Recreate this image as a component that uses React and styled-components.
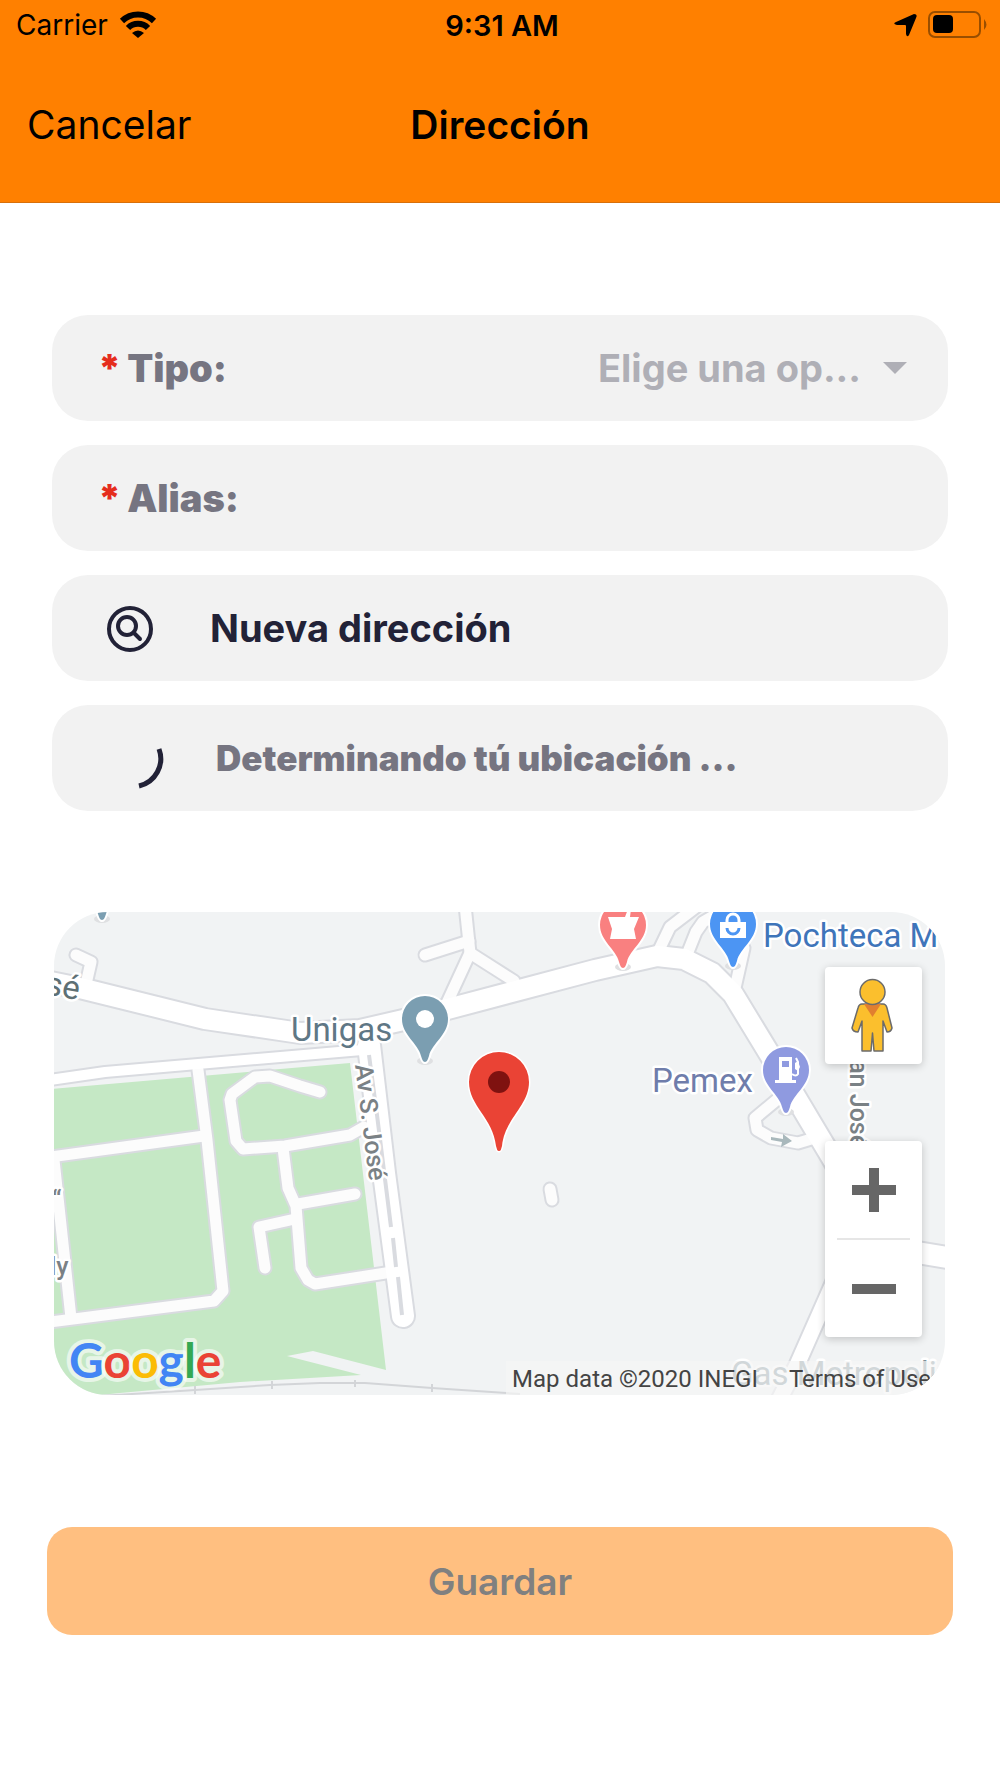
import React from 'react'

import styled, { createGlobalStyle } from 'styled-components'

const Colors = {
  primary: '#ff8000',
  field: '#f2f2f2',
  label: '#767581',
  placeholder: '#afafb6',
  dark: '#222237',
  required: '#e52d1d',
}

const streets = [
  'M76 955 L91 962 L86 984',
  'M465 905 L470 953 L446 1005',
  'M425 955 L469 941',
  'M470 953 L514 981',
  'M700 904 L670 927 L659 950',
  'M722 911 L703 922 L696 932 L688 952',
  'M744 948 L735 988',
  'M779 1098 L755 1118 L757 1130 L771 1138 L798 1143 L818 1137',
  'M550 1189 L552 1200',
]

const parkStreets = [
  'M50 1157 L204 1136',
  'M198 1070 L207 1140 L223 1291 L214 1301 L50 1322',
  'M54 1160 L71 1318',
  'M320 1092 L300 1086 L270 1076 L255 1077 L232 1094 L230 1100 L236 1141 L243 1149 L285 1146 L350 1135 L364 1127',
  'M283 1148 L288 1188 L296 1206 L301 1268 L308 1280 L315 1284 L392 1272',
  'M298 1204 L355 1194',
  'M295 1219 L259 1227 L265 1268',
]

const avenues = [
  { d: 'M50 982 L80 988 L205 1019 L300 1033 L360 1030 L425 1015 L595 970 L657 956 L684 959 L712 973 L733 994 L795 1096 L900 1272', width: 20 },
  { d: 'M860 1243 L950 1258', width: 21 },
  { d: 'M850 1245 L797 1365 L778 1402', width: 15 },
  { d: 'M50 1080 L105 1072 L362 1050', width: 10 },
  { d: 'M369 1045 L384 1173 L403 1316', width: 22 },
]

const pinShape = 'M0 43 C-2 43 -3 40 -4 37 C-7 24 -23 16 -23 0 A23 23 0 0 1 23 0 C23 16 7 24 4 37 C3 40 2 43 0 43 Z'

const Pin = ({ x, y, color, children }) => (
  <g transform={`translate(${x} ${y})`}>
    <ellipse cx="0" cy="42" rx="8" ry="4" fill="#dfe0e2" />
    <path d={pinShape} fill={color} stroke="#fff" strokeWidth="4" paintOrder="stroke" />
    {children}
  </g>
)

const MapDrawing = () => (
  <MapSvg viewBox="54 912 891 483" preserveAspectRatio="xMidYMid slice" aria-hidden="true">
    <path d="M50 1089 L350 1063 L386 1370 L313 1351 L287 1356 L361 1375 L240 1382 L120 1393 L50 1400 Z" fill="#c5e8c5" />
    <path d="M100 1396 L180 1391 L270 1385 L320 1383 L365 1383 L432 1388 L520 1394" fill="none" stroke="#d3d5d8" strokeWidth="2" />
    <path d="M195 1386v8 M272 1381v8 M355 1380v7 M432 1384v8" stroke="#d3d5d8" strokeWidth="2" />

    <g fill="none" strokeLinecap="round" strokeLinejoin="round">
      {[...streets, ...parkStreets].map(d => <path key={d} d={d} stroke="#d9dbe0" strokeWidth="15" />)}
      {avenues.map(road => <path key={road.d} d={road.d} stroke="#d9dbe0" strokeWidth={road.width + 4} />)}
      {[...streets, ...parkStreets].map(d => <path key={d} d={d} stroke="#fcfcfc" strokeWidth="11" />)}
      {avenues.map(road => <path key={road.d} d={road.d} stroke="#fff" strokeWidth={road.width} />)}
    </g>
    <path d="M369 1055 L377 1115 L391 1227 M393 1238 L396 1267 M398 1277 L402 1315" fill="none" stroke="#d9dbe0" strokeWidth="4" />
    <path d="M771 1137 L783 1139 L783 1134 L792 1141 L781 1147 L782 1142 L771 1140 Z" fill="#a9b8bc" />

    <Pin x={102} y={877} color="#7b9eb1" />
    <Pin x={425} y={1019} color="#7b9eb1">
      <circle r="9" fill="#fff" />
    </Pin>
    <Pin x={623} y={925} color="#f98080">
      <path d="M-15 -8 H2 L5 -16 H8 L7 -8 H16 L11 4 L13 14 H-13 L-11 4 Z" fill="#fff" />
    </Pin>
    <Pin x={733} y={924} color="#4c95f3">
      <path d="M-13 -2 H13 V14 H-13 Z" fill="#fff" />
      <path d="M-6 -1 V-4 A6 6 0 0 1 6 -4 V-1" fill="none" stroke="#fff" strokeWidth="3" />
      <path d="M-6 4 A6 6 0 0 0 6 4" fill="none" stroke="#4c95f3" strokeWidth="3" />
    </Pin>
    <Pin x={786} y={1070} color="#8f9ae0">
      <path d="M-7 -13 H6 V10 H10 V13 H-11 V10 H-7 Z" fill="#fff" />
      <path d="M-4 -9 H3 V-3 H-4 Z" fill="#8f9ae0" />
      <path d="M10 -12 L12 -8 L12 4 Q10 7 6 4" fill="none" stroke="#fff" strokeWidth="2" />
      <path d="M9 -7 L12 -9 L14 -3 L12 1 L9 -1 Z" fill="#fff" />
    </Pin>
    <path
      transform="translate(499 1082)"
      d="M0 69 C-2 69 -2 67 -3 64 C-6 36 -30 24 -30 0 A30 30 0 0 1 30 0 C30 24 6 36 3 64 C2 67 2 69 0 69 Z"
      fill="#ea4335" stroke="#fff" strokeWidth="3" paintOrder="stroke"
    />
    <circle cx="499" cy="1082" r="11" fill="#7f1210" />

    <MapLabel x="291" y="1041" fill="#5f7785">Unigas</MapLabel>
    <MapLabel x="652" y="1092" fill="#6f7dab">Pemex</MapLabel>
    <MapLabel x="763" y="947" fill="#3f75ba">Pochteca M</MapLabel>
    <MapLabel x="731" y="1385" fill="#7d8f98">Gas Metropoli</MapLabel>
    <MapLabel transform="translate(44 994) rotate(10)" fill="#5e7075">sé</MapLabel>
    <StreetLabel transform="translate(355 1065) rotate(83)">Av S. José</StreetLabel>
    <StreetLabel transform="translate(850 1045) rotate(90)">San José</StreetLabel>
    <StreetLabel x="52" y="1208">“</StreetLabel>
    <StreetLabel x="50" y="1275">ly</StreetLabel>
    <Logo x="69" y="1378">
      <tspan fill="#4285f4">G</tspan>
      <tspan fill="#ea4335">o</tspan>
      <tspan fill="#fbbc05">o</tspan>
      <tspan fill="#4285f4">g</tspan>
      <tspan fill="#34a853">l</tspan>
      <tspan fill="#ea4335">e</tspan>
    </Logo>
  </MapSvg>
)

class App extends React.Component {
  constructor(props) {
    super(props)
    this.state = {
      type: '',
      alias: '',
    }
  }

  render() {
    return (
      <>
        <GlobalStyle />
        <Header>
          <StatusBar>
            <StatusSide>
              <span>Carrier</span>
              <svg width="38" height="28" viewBox="0 0 38 28">
                <path d="M3 10 A23 23 0 0 1 35 10" fill="none" stroke="#000" strokeWidth="6" />
                <path d="M9 17 A14 14 0 0 1 29 17" fill="none" stroke="#000" strokeWidth="6" />
                <path d="M19 27 L13 22 Q19 17 25 22 Z" />
              </svg>
            </StatusSide>
            <Clock>9:31 AM</Clock>
            <StatusSide $end>
              <svg width="23" height="23" viewBox="0 0 23 23">
                <path d="M20 0 Q24 0 22 4 L15 21 Q13 24 12 20 V12 Q12 11 11 11 H3 Q-2 10 2 8 Z" />
              </svg>
              <svg width="60" height="28" viewBox="0 0 60 28">
                <rect x="1" y="1" width="51" height="25" rx="6" fill="none" stroke="#994e00" strokeWidth="2" />
                <rect x="5" y="4" width="20" height="18" rx="4" />
                <path d="M56 8 Q61 14 56 19 Z" fill="#994e00" />
              </svg>
            </StatusSide>
          </StatusBar>
          <NavBar>
            <CancelButton type="button">Cancelar</CancelButton>
            <Title>Dirección</Title>
          </NavBar>
        </Header>

        <Content onSubmit={(e) => e.preventDefault()}>
          <Fields>
            <Field>
              <Label htmlFor="tipo"><Required>*</Required>Tipo:</Label>
              <Select id="tipo" value={this.state.type} onChange={(e) => this.setState({ type: e.target.value })}>
                <option value="">Elige una op...</option>
              </Select>
              <svg width="24" height="12" viewBox="0 0 24 12">
                <path d="M0 0 H24 L12 12 Z" fill={Colors.placeholder} />
              </svg>
            </Field>
            <Field>
              <Label htmlFor="alias"><Required>*</Required>Alias:</Label>
              <Input id="alias" type="text" value={this.state.alias} onChange={(e) => this.setState({ alias: e.target.value })} />
            </Field>
            <Field as="button" type="button">
              <IconBox>
                <svg width="48" height="48" viewBox="0 0 48 48" fill="none" stroke={Colors.dark} strokeWidth="4" strokeLinecap="round">
                  <circle cx="24" cy="25" r="21" />
                  <circle cx="21" cy="22" r="9" />
                  <path d="M28 29 L34 35" />
                </svg>
              </IconBox>
              <FieldText>Nueva dirección</FieldText>
            </Field>
            <Field role="status">
              <IconBox $wide>
                <svg width="66" height="62" viewBox="0 0 66 62">
                  <path d="M59 22 A28 28 0 0 1 39 59" fill="none" stroke={Colors.dark} strokeWidth="5" />
                </svg>
              </IconBox>
              <StatusText>Determinando tú ubicación ...</StatusText>
            </Field>
          </Fields>

          <MapBox>
            <MapDrawing />
            <Attribution>
              <span>Map data ©2020 INEGI</span>
              <a href="#terms">Terms of Use</a>
            </Attribution>
            <Controls>
              <ControlCard>
                <MapButton type="button" aria-label="Street View">
                  <svg width="97" height="97" viewBox="0 0 97 97" stroke="#6b6b6b" strokeWidth="1.5" strokeLinejoin="round">
                    <path d="M37 37 H58 Q61 37 62 41 L67 61 Q66 65 62 65 L58 54 V84 H49 L47.500 66 L46 84 H37 V54 L33 65 Q28 65 27 61 L33 41 Q34 37 37 37 Z" fill="#fbbf2d" />
                    <path d="M39 37 H56 L47.500 50 Z" fill="#e17f2f" stroke="none" />
                    <circle cx="47.500" cy="25" r="12.500" fill="#fbbf2d" />
                  </svg>
                </MapButton>
              </ControlCard>
              <ControlCard>
                <MapButton type="button" aria-label="Zoom in">
                  <svg width="44" height="44" viewBox="0 0 44 44"><path d="M17 0 H27 V17 H44 V27 H27 V44 H17 V27 H0 V17 H17 Z" fill="#666" /></svg>
                </MapButton>
                <Divider />
                <MapButton type="button" aria-label="Zoom out">
                  <svg width="44" height="44" viewBox="0 0 44 44"><path d="M0 17 H44 V27 H0 Z" fill="#666" /></svg>
                </MapButton>
              </ControlCard>
            </Controls>
          </MapBox>

          <SaveButton type="submit" disabled>Guardar</SaveButton>
        </Content>
      </>
    )
  }
}

const GlobalStyle = createGlobalStyle`
* {
  box-sizing: border-box;
}
body {
  margin: 0;
  background-color: #fff;
  font-family: Inter, "Liberation Sans", sans-serif;
}
button, input, select {
  font-family: inherit;
  border: 0;
  padding: 0;
  background: none;
}
svg {
  display: block;
  flex-shrink: 0;
}
`
const Header = styled.header`
  background-color: ${Colors.primary};
  border-bottom: 1px solid #d8700a;
  padding-bottom: 44px;
`
const StatusBar = styled.div`
  display: grid;
  grid-template-columns: 1fr auto 1fr;
  align-items: center;
  height: 50px;
  padding: 0 12px 0 16px;
  font-size: 28px;
`
const StatusSide = styled.div`
  display: flex;
  align-items: center;
  justify-content: ${props => props.$end ? 'flex-end' : 'flex-start'};
  gap: 11px;
`
const Clock = styled.span`
  font-size: 29px;
  font-weight: 600;
`
const NavBar = styled.div`
  display: grid;
  grid-template-columns: 1fr auto 1fr;
  align-items: center;
  height: 108px;
  padding: 42px 27px 0;
`
const CancelButton = styled.button`
  justify-self: start;
  font-size: 39px;
  line-height: 48px;
  color: #000;
`
const Title = styled.h1`
  margin: 0;
  font-size: 39px;
  line-height: 48px;
  font-weight: 600;
`
const Content = styled.form`
  padding: 112px 47px 144px;
`
const Fields = styled.div`
  display: flex;
  flex-direction: column;
  gap: 24px;
  padding: 0 5px;
`
const Field = styled.div`
  display: flex;
  align-items: center;
  width: 100%;
  height: 106px;
  padding: 0 41px 0 46px;
  border-radius: 36px;
  background-color: ${Colors.field};
`
const Label = styled.label`
  display: flex;
  gap: 6px;
  font-size: 38px;
  font-weight: 900;
  color: ${Colors.label};
`
const Required = styled.span`
  color: ${Colors.required};
`
const Select = styled.select`
  flex: 1;
  min-width: 0;
  margin-right: 22px;
  appearance: none;
  font-size: 38px;
  font-weight: 700;
  text-align-last: right;
  color: ${Colors.placeholder};
`
const Input = styled.input`
  flex: 1;
  min-width: 0;
  height: 100%;
  padding-left: 16px;
  font-size: 38px;
  color: ${Colors.dark};
  outline: none;
`
const IconBox = styled.span`
  display: flex;
  justify-content: center;
  width: ${props => props.$wide ? '70px' : '64px'};
  margin-right: 48px;
`
const FieldText = styled.span`
  font-size: 38px;
  font-weight: 700;
  color: ${Colors.dark};
`
const StatusText = styled.span`
  font-size: 35px;
  font-weight: 900;
  color: ${Colors.label};
`
const MapBox = styled.div`
  position: relative;
  height: 483px;
  margin: 101px 8px 132px 7px;
  border-radius: 54px;
  overflow: hidden;
  background-color: #f1f3f4;
`
const MapSvg = styled.svg`
  width: 100%;
  height: 100%;
`
const MapLabel = styled.text`
  font-family: Roboto, sans-serif;
  font-size: 33px;
  stroke: #fff;
  stroke-width: 5px;
  stroke-linejoin: round;
  paint-order: stroke;
`
const StreetLabel = styled(MapLabel)`
  font-size: 25px;
  font-weight: 500;
  fill: #7a8185;
`
const Logo = styled.text`
  font-family: Lato, sans-serif;
  font-size: 48px;
  font-weight: 700;
  stroke: rgba(255, 255, 255, 0.6);
  stroke-width: 8px;
  stroke-linejoin: round;
  paint-order: stroke;
`
const Attribution = styled.div`
  position: absolute;
  right: 0;
  bottom: 0;
  display: flex;
  gap: 31px;
  height: 34px;
  padding: 0 14px 0 6px;
  background-color: rgba(245, 245, 245, 0.7);
  font-family: Roboto, sans-serif;
  font-size: 24px;
  line-height: 36px;
  color: #444;
  a {
    color: inherit;
    text-decoration: none;
  }
`
const Controls = styled.div`
  position: absolute;
  top: 55px;
  right: 23px;
  bottom: 58px;
  display: flex;
  flex-direction: column;
  justify-content: space-between;
`
const ControlCard = styled.div`
  width: 97px;
  border-radius: 4px;
  background-color: #fff;
  box-shadow: 0 2px 8px rgba(0, 0, 0, 0.2);
`
const MapButton = styled.button`
  display: flex;
  align-items: center;
  justify-content: center;
  width: 97px;
  height: 97px;
`
const Divider = styled.div`
  height: 2px;
  margin: 0 12px;
  background-color: #e6e6e6;
`
const SaveButton = styled.button`
  width: 100%;
  height: 108px;
  border-radius: 25px;
  background-color: #ffbf80;
  font-size: 37px;
  font-weight: 600;
  color: #808080;
`

export default App
